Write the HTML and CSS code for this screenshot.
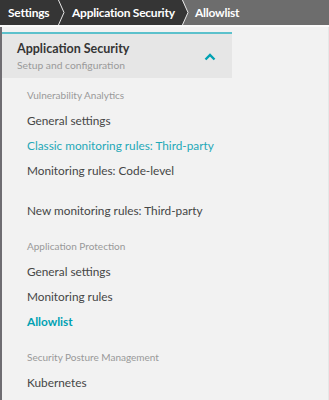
FILE: index.html
```html
<!DOCTYPE html>
<html>
<head>
<meta charset="utf-8">
<link rel="stylesheet" href="styles.css">
</head>
<body>
<nav class="crumbs">
  <span class="crumb dark first">Settings</span>
  <svg class="sep" width="10" height="25" viewBox="0 0 10 25"><rect width="10" height="25" fill="#353535"/><polygon points="0,0 1,0 7,12.5 1,25 0,25" fill="#353535"/><polyline points="1,-1 7,12.5 1,26" fill="none" stroke="#e8e8e8" stroke-width="1"/></svg>
  <span class="crumb dark second">Application Security</span>
  <svg class="sep" width="10" height="25" viewBox="0 0 10 25"><rect width="10" height="25" fill="#6d6d6d"/><polygon points="0,0 1,0 7,12.5 1,25 0,25" fill="#353535"/><polyline points="1,-1 7,12.5 1,26" fill="none" stroke="#e8e8e8" stroke-width="1"/></svg>
  <span class="crumb light">Allowlist</span>
</nav>
<div class="layout">
  <aside class="panel">
    <div class="head">
      <div class="head-text">
        <div class="title">Application Security</div>
        <div class="sub">Setup and configuration</div>
      </div>
      <svg class="chev" width="12" height="8" viewBox="0 0 12 8"><polyline points="1.5,6.5 6,2 10.5,6.5" fill="none" stroke="#00a1b2" stroke-width="2.4"/></svg>
    </div>
    <div class="list">
      <div class="group first">
        <div class="label">Vulnerability Analytics</div>
        <div class="item">General settings</div>
        <div class="item active">Classic monitoring rules: Third-party</div>
        <div class="item">Monitoring rules: Code-level</div>
      </div>
      <div class="group extra">
        <div class="item">New monitoring rules: Third-party</div>
      </div>
      <div class="group">
        <div class="label">Application Protection</div>
        <div class="item">General settings</div>
        <div class="item">Monitoring rules</div>
        <div class="item current">Allowlist</div>
      </div>
      <div class="group">
        <div class="label">Security Posture Management</div>
        <div class="item">Kubernetes</div>
      </div>
    </div>
  </aside>
</div>
</body>
</html>
```
FILE: styles.css
```css
html, body {
  margin: 0;
  padding: 0;
}
body {
  background: #f2f2f2;
  font-family: Lato, "Open Sans", sans-serif;
  width: 329px;
  height: 400px;
  overflow: hidden;
}
.crumbs {
  display: flex;
  align-items: stretch;
  height: 25px;
  background: #6d6d6d;
  border-bottom: 2px solid #fafafa;
}
.crumb {
  display: flex;
  align-items: center;
  flex: none;
  box-sizing: border-box;
  color: #fff;
  font-weight: 700;
  font-size: 12px;
  letter-spacing: -0.25px;
  white-space: nowrap;
  padding-bottom: 1px;
}
.crumb.dark {
  background: #353535;
}
.crumb.first {
  width: 57px;
  padding-left: 8px;
}
.crumb.second {
  width: 114px;
  padding-left: 5px;
}
.crumb.light {
  padding-left: 4px;
}
.sep {
  display: block;
  flex: none;
}
.layout {
  border-left: 2px solid #6f6d72;
  padding-top: 5px;
  height: 373px;
  border-right: 1px solid #e6e6e6;
}
.panel {
  width: 230px;
}
.head {
  background: #e6e6e6;
  border-top: 2px solid #5cc1cc;
  height: 44px;
  display: flex;
  align-items: center;
  justify-content: space-between;
  padding: 0 16px 0 15px;
}
.head-text {
  padding-top: 2px;
}
.title {
  font-weight: 700;
  font-size: 12.5px;
  color: #353535;
  line-height: 16px;
}
.sub {
  font-size: 10.3px;
  color: #9a9a9a;
  line-height: 15px;
  margin-top: 1px;
}
.chev {
  display: block;
  margin-top: 2px;
}
.list {
  padding-left: 25px;
}
.group {
  margin-top: 11px;
}
.group.first {
  margin-top: 5px;
}
.group.extra {
  margin-top: 15px;
}
.label {
  font-size: 10px;
  color: #999;
  line-height: 25px;
}
.item {
  font-size: 11.8px;
  color: #454646;
  line-height: 25px;
  white-space: nowrap;
}
.item.active {
  color: #1fa9b8;
}
.item.current {
  color: #00a1b2;
  font-weight: 700;
}
```
